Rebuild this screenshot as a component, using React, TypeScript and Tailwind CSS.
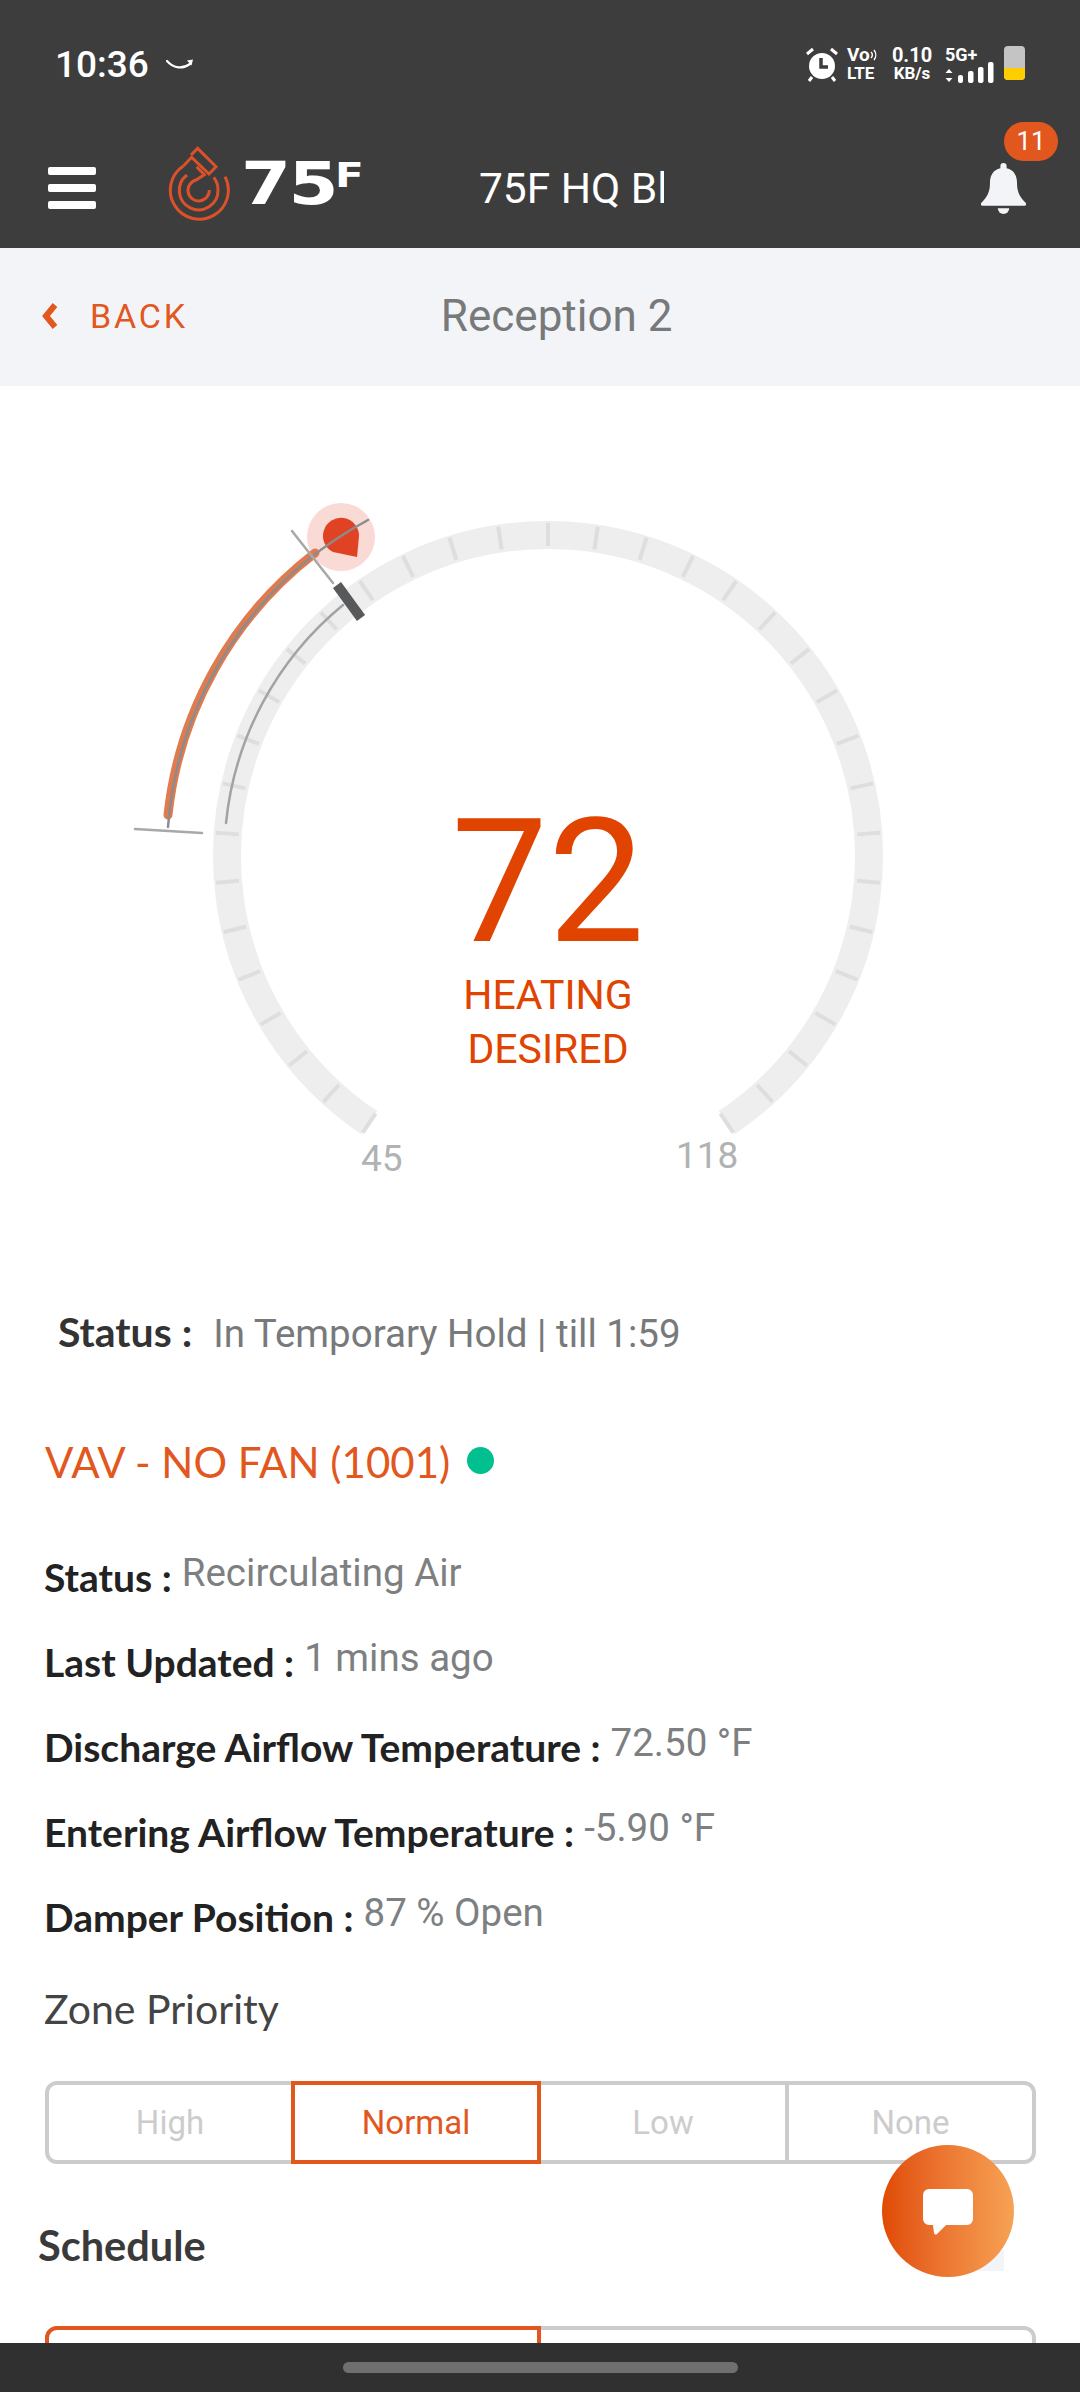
import React from "react";

const orange = "#e2571e";

// gauge centre and radii measured on the page, svg starts at y=386
const CX = 548;
const CY = 470;

const polar = (r: number, deg: number) => {
  const a = ((deg - 90) * Math.PI) / 180;
  return [CX + r * Math.cos(a), CY + r * Math.sin(a)];
};

const trackPath = () => {
  const [x1, y1] = polar(321, -146.2);
  const [x2, y2] = polar(321, 146.2);
  return `M${x1} ${y1} A321 321 0 1 1 ${x2} ${y2}`;
};

const ticks = Array.from({ length: 35 }, (_, i) => -146.2 + i * 8.6);

const Gauge = () => (
  <div className="relative h-[904px] w-full">
    <svg width="1080" height="904" viewBox="0 0 1080 904" fill="none" className="block">
      <path d={trackPath()} stroke="#eeeeee" strokeWidth="28" />
      {ticks.map((t) => {
        const [x1, y1] = polar(310, t);
        const [x2, y2] = polar(333, t);
        return <line key={t} x1={x1} y1={y1} x2={x2} y2={y2} stroke="#dedede" strokeWidth="4" />;
      })}
      {/* inner grey line and dark marker */}
      <path d="M226 437 A324 324 0 0 1 343 219" stroke="#a3a3a3" strokeWidth="2.5" strokeLinecap="round" />
      <line x1="337" y1="199" x2="361" y2="232" stroke="#58595b" strokeWidth="10" />
      {/* pin */}
      <circle cx="341" cy="151" r="34" fill="#f9dad4" />
      <path d="M357 171 L333 166 A18 18 0 1 1 359 150 Z" fill="#e04324" />
      {/* outer arc */}
      <path d="M168 429 A382 382 0 0 1 315 167" stroke="#e07b4f" strokeWidth="9" strokeLinecap="round" />
      <path d="M168 441 A382 382 0 0 1 368 134" stroke="#8c8c8c" strokeWidth="2.5" strokeLinecap="round" />
      <line x1="135" y1="443" x2="202" y2="447" stroke="#a8a8a8" strokeWidth="2.5" strokeLinecap="round" />
      <line x1="292" y1="145" x2="333" y2="197" stroke="#a8a8a8" strokeWidth="2.5" strokeLinecap="round" />
    </svg>

    <div className="absolute left-[248px] top-[410px] w-[600px] text-center font-['Roboto',sans-serif] text-[#e04400]">
      <div className="text-[172px] leading-[172px] font-normal">72</div>
      <div className="text-[41px] leading-[54px]">HEATING</div>
      <div className="text-[41px] leading-[54px]">DESIRED</div>
    </div>
    <span className="absolute left-[361px] top-[752px] font-['Roboto',sans-serif] text-[37px] leading-[42px] text-[#b0b2b3]">45</span>
    <span className="absolute left-[676px] top-[749px] font-['Roboto',sans-serif] text-[37px] leading-[42px] text-[#b0b2b3]">118</span>
  </div>
);

const Logo = () => (
  <svg width="66" height="78" viewBox="45 35 198 234" fill="none" stroke="#dc5129" strokeWidth="9" strokeLinejoin="miter">
    <path d="M97 98 A87 87 0 1 0 222 130" />
    <path d="M97 98 L122 72 L174 122 L195 100 L140 45 L120 65" />
    <path d="M108 125 A58 58 0 1 0 201 170 C201 155 196 142 188 132" />
    <path d="M137 100 L160 124 L135 140 A32 32 0 1 0 175 170" />
  </svg>
);

const StatusIcons = () => (
  <div className="flex items-start text-white font-['Roboto',sans-serif] font-bold">
    <svg width="32" height="35" viewBox="0 0 32 35" className="mr-[9px] mt-[1px]">
      <circle cx="16" cy="19" r="13" fill="#fff" />
      <path d="M15 11v9h7" stroke="#3d3d3d" strokeWidth="3.5" fill="none" />
      <path d="M1 7l6-5M31 7l-6-5M6 30l-3 4M26 30l3 4" stroke="#fff" strokeWidth="3" fill="none" />
    </svg>
    <div className="w-[38px] text-[17px] leading-[18px]">
      <div className="flex items-center">
        <span className="text-[19px]">Vo</span>
        <svg width="8" height="14" viewBox="0 0 8 14" fill="none" stroke="#fff" strokeWidth="1.4">
          <path d="M1 4a4 4 0 0 1 0 6M4 2a8 8 0 0 1 0 10" />
        </svg>
      </div>
      <div>LTE</div>
    </div>
    <div className="w-[54px] text-center text-[17px] leading-[18px]">
      <div className="text-[20px]">0.10</div>
      <div>KB/s</div>
    </div>
    <div className="ml-[6px] flex w-[59px] flex-col">
      <span className="text-[18px] leading-[18px]">5G+</span>
      <svg width="50" height="22" viewBox="0 0 50 22" fill="#fff" className="-mt-[2px]">
        <path d="M4 8l3.500 4h-7zM4 21l3.500-4h-7z" transform="translate(0 -1)" />
        <rect x="13" y="13" width="5" height="8" rx="2" />
        <rect x="23" y="9" width="5.500" height="12" rx="2" />
        <rect x="33" y="5" width="5.500" height="16" rx="2" />
        <rect x="43" y="0" width="5.500" height="21" rx="2" />
      </svg>
    </div>
    <div className="flex h-[34px] w-[21px] flex-col overflow-hidden rounded-[4px] bg-[#c4c4c4]">
      <div className="flex-1" />
      <div className="h-[12px] bg-[#ffcd00]" />
    </div>
  </div>
);

const Bell = () => (
  <svg width="45" height="52" viewBox="0 0 43 50" fill="#f3f4f8">
    <path d="M21.500 0a3 3 0 0 1 3 3v2c7 1.500 10 7 10 14 0 8 2 13 8 19 2 2 1 3-1 3H1.500c-2 0-3-1-1-3 6-6 8-11 8-19 0-7 3-12.500 10-14V3a3 3 0 0 1 3-3z" />
    <path d="M16 43.500h11a5.500 5.500 0 0 1-11 0z" />
  </svg>
);

const Header = () => (
  <div className="h-[248px] bg-[#3d3d3d]">
    <div className="flex h-[130px] items-center pl-[55px] pr-[55px]">
      <span className="font-['Roboto',sans-serif] text-[37px] font-medium text-white">10:36</span>
      <svg width="28" height="14" viewBox="0 0 28 14" fill="none" className="ml-[17px]">
        <path d="M1 3c7 8 16 8 23 3" stroke="#fff" strokeWidth="2.200" strokeLinecap="round" />
        <path d="M21 2.500l6-1-1.500 6z" fill="#fff" />
      </svg>
      <div className="ml-auto">
        <StatusIcons />
      </div>
    </div>
    <div className="flex h-[118px] items-center pl-[48px] pr-[54px]">
      <div className="-mt-[3px] flex w-[48px] flex-col gap-[9px]">
        <div className="h-[8px] rounded-[2px] bg-white" />
        <div className="h-[8px] rounded-[2px] bg-white" />
        <div className="h-[8px] rounded-[2px] bg-white" />
      </div>
      <div className="ml-[70px] -mt-[10px]">
        <Logo />
      </div>
      <div className="ml-[9px] -mt-[10px] flex origin-left scale-x-[1.24] items-start font-['DejaVu_Sans',sans-serif] font-bold text-white">
        <span className="text-[58px] leading-[58px] tracking-[-2px]">75</span>
        <span className="-ml-[1px] text-[34px] leading-[40px]">F</span>
      </div>
      <div className="ml-[139px] w-[185px] overflow-hidden whitespace-nowrap font-['Roboto',sans-serif] text-[42.500px] leading-[48px] text-white">
        75F HQ Bldg
      </div>
      <div className="relative ml-auto">
        <Bell />
        <span className="absolute -top-[41px] left-[23px] flex h-[39px] w-[54px] items-center justify-center rounded-full bg-[#e2571e] font-['Roboto',sans-serif] text-[26px] text-white">
          11
        </span>
      </div>
    </div>
  </div>
);

const SubHeader = () => (
  <div className="flex h-[138px] items-center bg-[#f3f4f8] pb-[2px] pl-[41px] font-['Roboto',sans-serif]">
    <svg width="18" height="28" viewBox="0 0 18 28" fill="none">
      <path d="M14 3L5 14l9 11" stroke={orange} strokeWidth="6" />
    </svg>
    <span className="ml-[31px] text-[34px] tracking-[2.800px] text-[#e2571e]">BACK</span>
    <span className="ml-[253px] text-[44px] text-[#77797b]">Reception 2</span>
  </div>
);

const rows = [
  ["Status :", "Recirculating Air"],
  ["Last Updated :", "1 mins ago"],
  ["Discharge Airflow Temperature :", "72.50 °F"],
  ["Entering Airflow Temperature :", "-5.90 °F"],
  ["Damper Position :", "87 % Open"],
];

const Segment = () => (
  <div className="ml-[45px] mr-[44px] mt-[47px] flex h-[83px] rounded-[12px] border-4 border-[#cccccc] font-['Roboto',sans-serif] text-[33px] text-[#cccccc]">
    <div className="flex w-[242px] items-center justify-center">High</div>
    <div className="-my-[4px] flex w-[250px] items-center justify-center border-4 border-[#e2571e] text-[#e2571e]">
      Normal
    </div>
    <div className="flex w-[248px] items-center justify-center border-r-4 border-[#cccccc]">Low</div>
    <div className="flex flex-1 items-center justify-center">None</div>
  </div>
);

export default function App() {
  return (
    <div className="relative flex h-[2392px] w-[1080px] flex-col overflow-hidden bg-white">
      <Header />
      <SubHeader />
      <div className="min-h-0 flex-1 overflow-hidden">
        <Gauge />
        <div className="mt-[12px] flex items-baseline pl-[58px]">
          <span className="font-['Lato',sans-serif] text-[41px] leading-[60px] font-bold text-[#333333]">Status :</span>
          <span className="ml-[21px] font-['Roboto',sans-serif] text-[38.500px] text-[#77797b]">In Temporary Hold | till 1:59</span>
        </div>
        <div className="mt-[69px] flex items-start pl-[45px]">
          <span className="font-['Lato',sans-serif] text-[42px] leading-[60px] text-[#e2571e]">VAV - NO FAN (1001)</span>
          <span className="ml-[17px] mt-[15px] h-[27px] w-[27px] rounded-full bg-[#00c08f]" />
        </div>
        <div className="mt-[56px] pl-[44px]">
          {rows.map(([label, value]) => (
            <div key={label} className="flex h-[85px] items-start whitespace-nowrap">
              <span className="mt-[4px] font-['Lato',sans-serif] text-[39px] leading-[50px] font-bold text-[#222222]">{label}</span>
              <span className="ml-[10px] font-['Roboto',sans-serif] text-[38.500px] leading-[50px] text-[#7d7f81]">{value}</span>
            </div>
          ))}
        </div>
        <div className="mt-[11px] pl-[44px] font-['Lato',sans-serif] text-[41px] leading-[50px] text-[#444444]">Zone Priority</div>
        <Segment />
        <div className="mt-[56px] pl-[38px] font-['Lato',sans-serif] text-[41.500px] leading-[50px] font-bold text-[#3a3a3a]">Schedule</div>
        <div className="ml-[45px] mr-[44px] mt-[56px] flex h-[83px] rounded-[12px] border-4 border-[#cccccc]">
          <div className="-my-[4px] -ml-[4px] h-[83px] w-[496px] rounded-tl-[12px] border-4 border-[#e2571e]" />
        </div>
      </div>
      <div className="flex h-[49px] shrink-0 items-center justify-center bg-[#303030]">
        <div className="h-[11px] w-[395px] rounded-full bg-[#6f6f6f]" />
      </div>

      {/* floating chat button */}
      <div className="absolute left-[970px] top-[2250px] h-[21px] w-[34px] bg-[#f3f4f8]" />
      <div className="absolute left-[882px] top-[2145px] flex h-[132px] w-[132px] items-center justify-center rounded-full bg-gradient-to-r from-[#e04a00] to-[#f6a254]">
        <svg width="50" height="46" viewBox="0 0 50 46" fill="#fff" className="mt-[1px]">
          <path d="M6 0h38a6 6 0 0 1 6 6v24a6 6 0 0 1-6 6H23l-9 9a2 2 0 0 1-3-1l-1-8H6a6 6 0 0 1-6-6V6a6 6 0 0 1 6-6z" />
        </svg>
      </div>
    </div>
  );
}
